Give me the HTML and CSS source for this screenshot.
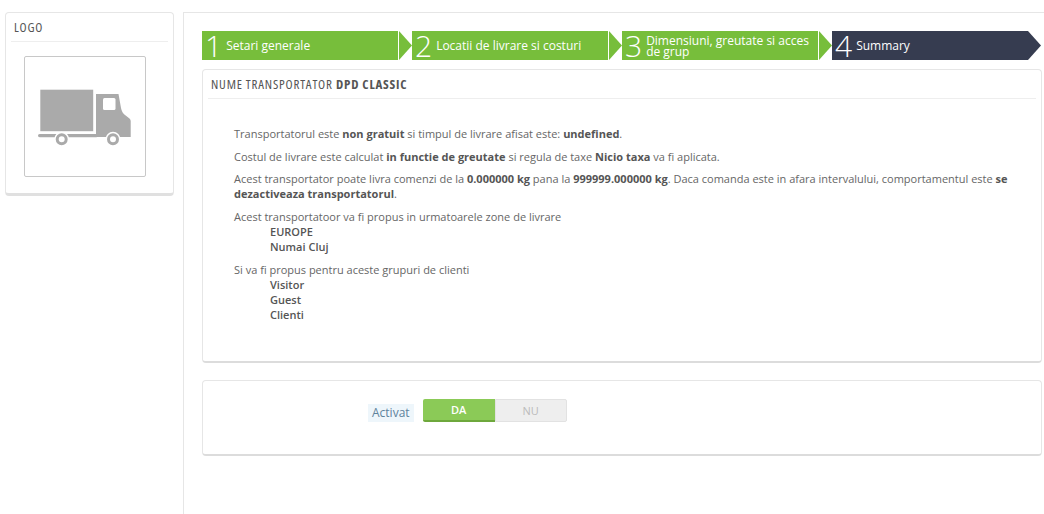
FILE: index.html
```html
<!DOCTYPE html>
<html lang="ro">
<head>
    <meta charset="UTF-8">
    <meta name="viewport" content="width=device-width, initial-scale=1.0">
    <title>Transportator - Summary</title>
    <link rel="stylesheet" href="styles.css">
</head>
<body>
    <aside class="sidebar">
        <div class="logo-panel">
            <h3 class="logo-title">LOGO</h3>
            <div class="logo-box">
                <svg class="truck" width="94" height="58" viewBox="38 88 94 58">
                    <rect x="40.3" y="89.7" width="52.9" height="41.5" fill="#aaa"/>
                    <path d="M96 94H118.5L121 108Q122 113 125 115L129.5 118.5Q130.7 119.5 130.7 121V137H96Z" fill="#aaa"/>
                    <rect x="38" y="134" width="60" height="3.2" rx="1.6" fill="#aaa"/>
                    <rect x="103" y="98" width="12.5" height="12" rx="1.5" fill="#fff"/>
                    <circle cx="61.7" cy="139.3" r="7.5" fill="#fff"/>
                    <circle cx="61.7" cy="139.3" r="4.5" fill="#fff" stroke="#aaa" stroke-width="3"/>
                    <circle cx="113" cy="139.3" r="7.5" fill="#fff"/>
                    <circle cx="113" cy="139.3" r="4.5" fill="#fff" stroke="#aaa" stroke-width="3"/>
                </svg>
            </div>
        </div>
    </aside>

    <main class="content">
        <ol class="steps">
            <li class="step">
                <div class="step-bar"><span class="step-num">1</span><span class="step-label">Setari generale</span></div>
                <span class="step-arrow"></span>
            </li>
            <li class="step">
                <div class="step-bar"><span class="step-num">2</span><span class="step-label">Locatii de livrare si costuri</span></div>
                <span class="step-arrow"></span>
            </li>
            <li class="step">
                <div class="step-bar"><span class="step-num">3</span><span class="step-label">Dimensiuni, greutate si acces de grup</span></div>
                <span class="step-arrow"></span>
            </li>
            <li class="step current">
                <div class="step-bar"><span class="step-num">4</span><span class="step-label">Summary</span></div>
                <span class="step-arrow"></span>
            </li>
        </ol>

        <section class="panel summary-panel">
            <h3 class="panel-heading">NUME TRANSPORTATOR <b>DPD CLASSIC</b></h3>
            <div class="summary">
                <p>Transportatorul este <b>non gratuit</b> si timpul de livrare afisat este: <b>undefined</b>.</p>
                <p>Costul de livrare este calculat <b>in functie de greutate</b> si regula de taxe <b>Nicio taxa</b> va fi aplicata.</p>
                <p>Acest transportator poate livra comenzi de la <b>0.000000 kg</b> pana la <b>999999.000000 kg</b>. Daca comanda este in afara intervalului, comportamentul este <b>se dezactiveaza transportatorul</b>.</p>
                <div class="summary-list">
                    Acest transportatoor va fi propus in urmatoarele zone de livrare
                    <ul>
                        <li>EUROPE</li>
                        <li>Numai Cluj</li>
                    </ul>
                </div>
                <div class="summary-list">
                    Si va fi propus pentru aceste grupuri de clienti
                    <ul>
                        <li>Visitor</li>
                        <li>Guest</li>
                        <li>Clienti</li>
                    </ul>
                </div>
            </div>
        </section>

        <section class="panel active-panel">
            <span class="active-label">Activat</span>
            <div class="switch">
                <span class="switch-on">DA</span>
                <span class="switch-off">NU</span>
            </div>
        </section>
    </main>
</body>
</html>
```

FILE: styles.css
```css
body {
    font-family: "Open Sans", Arial, sans-serif;
    font-size: 11px;
    line-height: 15px;
    color: #666;
    background-color: #fff;
    display: flex;
    align-items: flex-start;
    min-height: 100vh;
    margin: 0;
    box-sizing: border-box;
    padding-top: 12px;
    overflow: hidden;
}

.sidebar {
    width: 169px;
    margin-left: 5px;
    flex-shrink: 0;
}

.logo-panel {
    height: 184px;
    box-sizing: border-box;
    padding: 0 5px;
    background-color: #fff;
    border: 1px solid #e6e6e6;
    border-bottom: 3px solid #e0e0e0;
    border-radius: 4px;
}

.logo-title {
    height: 28px;
    margin: 0;
    padding-left: 3px;
    font-size: 13px;
    font-weight: normal;
    font-stretch: condensed;
    letter-spacing: 0.8px;
    line-height: 28px;
    color: #555;
    border-bottom: 1px solid #eee;
}

.logo-box {
    display: flex;
    align-items: center;
    justify-content: center;
    width: 122px;
    height: 121px;
    box-sizing: border-box;
    margin: 14px 0 0 13px;
    border: 1px solid #c8c8c8;
    border-radius: 2px;
}

.content {
    flex-grow: 1;
    min-height: 502px;
    box-sizing: border-box;
    margin-left: 9px;
    padding: 18px 2px 0 18px;
    border-left: 1px solid #e6e6e6;
    border-top: 1px solid #e6e6e6;
}

.steps {
    display: flex;
    list-style: none;
    margin: 0 0 9px;
    padding: 0;
}

.step {
    display: flex;
    width: 210px;
    height: 29px;
}

.step-bar {
    display: flex;
    align-items: center;
    width: 196px;
    box-sizing: border-box;
    padding-left: 3px;
    color: #fff;
    background-color: #77be3b;
}

.step-num {
    font-size: 30px;
    font-weight: 300;
    line-height: 29px;
    margin-right: 4px;
}

.step-label {
    font-size: 12px;
    line-height: 11px;
}

.step-arrow {
    width: 13px;
    margin-left: 1px;
    background-color: #77be3b;
    clip-path: polygon(0 0, 100% 50%, 0 100%);
}

.current .step-bar {
    background-color: #363c50;
}

.current .step-arrow {
    margin-left: 0;
    background-color: #363c50;
}

.panel {
    width: 840px;
    box-sizing: border-box;
    background-color: #fff;
    border: 1px solid #e6e6e6;
    border-bottom: 2px solid #dcdcdc;
    border-radius: 4px;
}

.summary-panel {
    height: 294px;
    padding: 0 5px;
    margin-bottom: 17px;
}

.panel-heading {
    height: 28px;
    margin: 0;
    padding-left: 3px;
    font-size: 13px;
    font-weight: normal;
    font-stretch: condensed;
    letter-spacing: 0.8px;
    line-height: 28px;
    color: #555;
    border-bottom: 1px solid #eee;
}

.summary {
    padding: 27px 26px 0;
}

.summary p {
    margin: 0 0 7.7px;
}

.summary b {
    font-weight: 700;
    color: #555;
}

.summary-list {
    margin-bottom: 7.7px;
}

.summary-list ul {
    list-style: none;
    margin: 0;
    padding-left: 36px;
    font-weight: 600;
    color: #555;
}

.active-panel {
    display: flex;
    align-items: flex-start;
    height: 76px;
    padding: 18px 0 0 165px;
}

.active-label {
    margin: 5px 9px 0 0;
    padding: 0 4px;
    height: 18px;
    line-height: 18px;
    font-size: 12px;
    color: #5e829c;
    background-color: #eef6fb;
}

.switch {
    display: flex;
    width: 144px;
    height: 23px;
    line-height: 22px;
    font-size: 11px;
    text-align: center;
}

.switch-on {
    width: 72px;
    box-sizing: border-box;
    color: #fff;
    font-weight: 600;
    background-color: #8bca57;
    border-bottom: 2px solid #6ea83c;
    border-radius: 2px 0 0 2px;
}

.switch-off {
    width: 72px;
    box-sizing: border-box;
    color: #bbb;
    background-color: #eee;
    border: 1px solid #e2e2e2;
    border-radius: 0 2px 2px 0;
}
```
